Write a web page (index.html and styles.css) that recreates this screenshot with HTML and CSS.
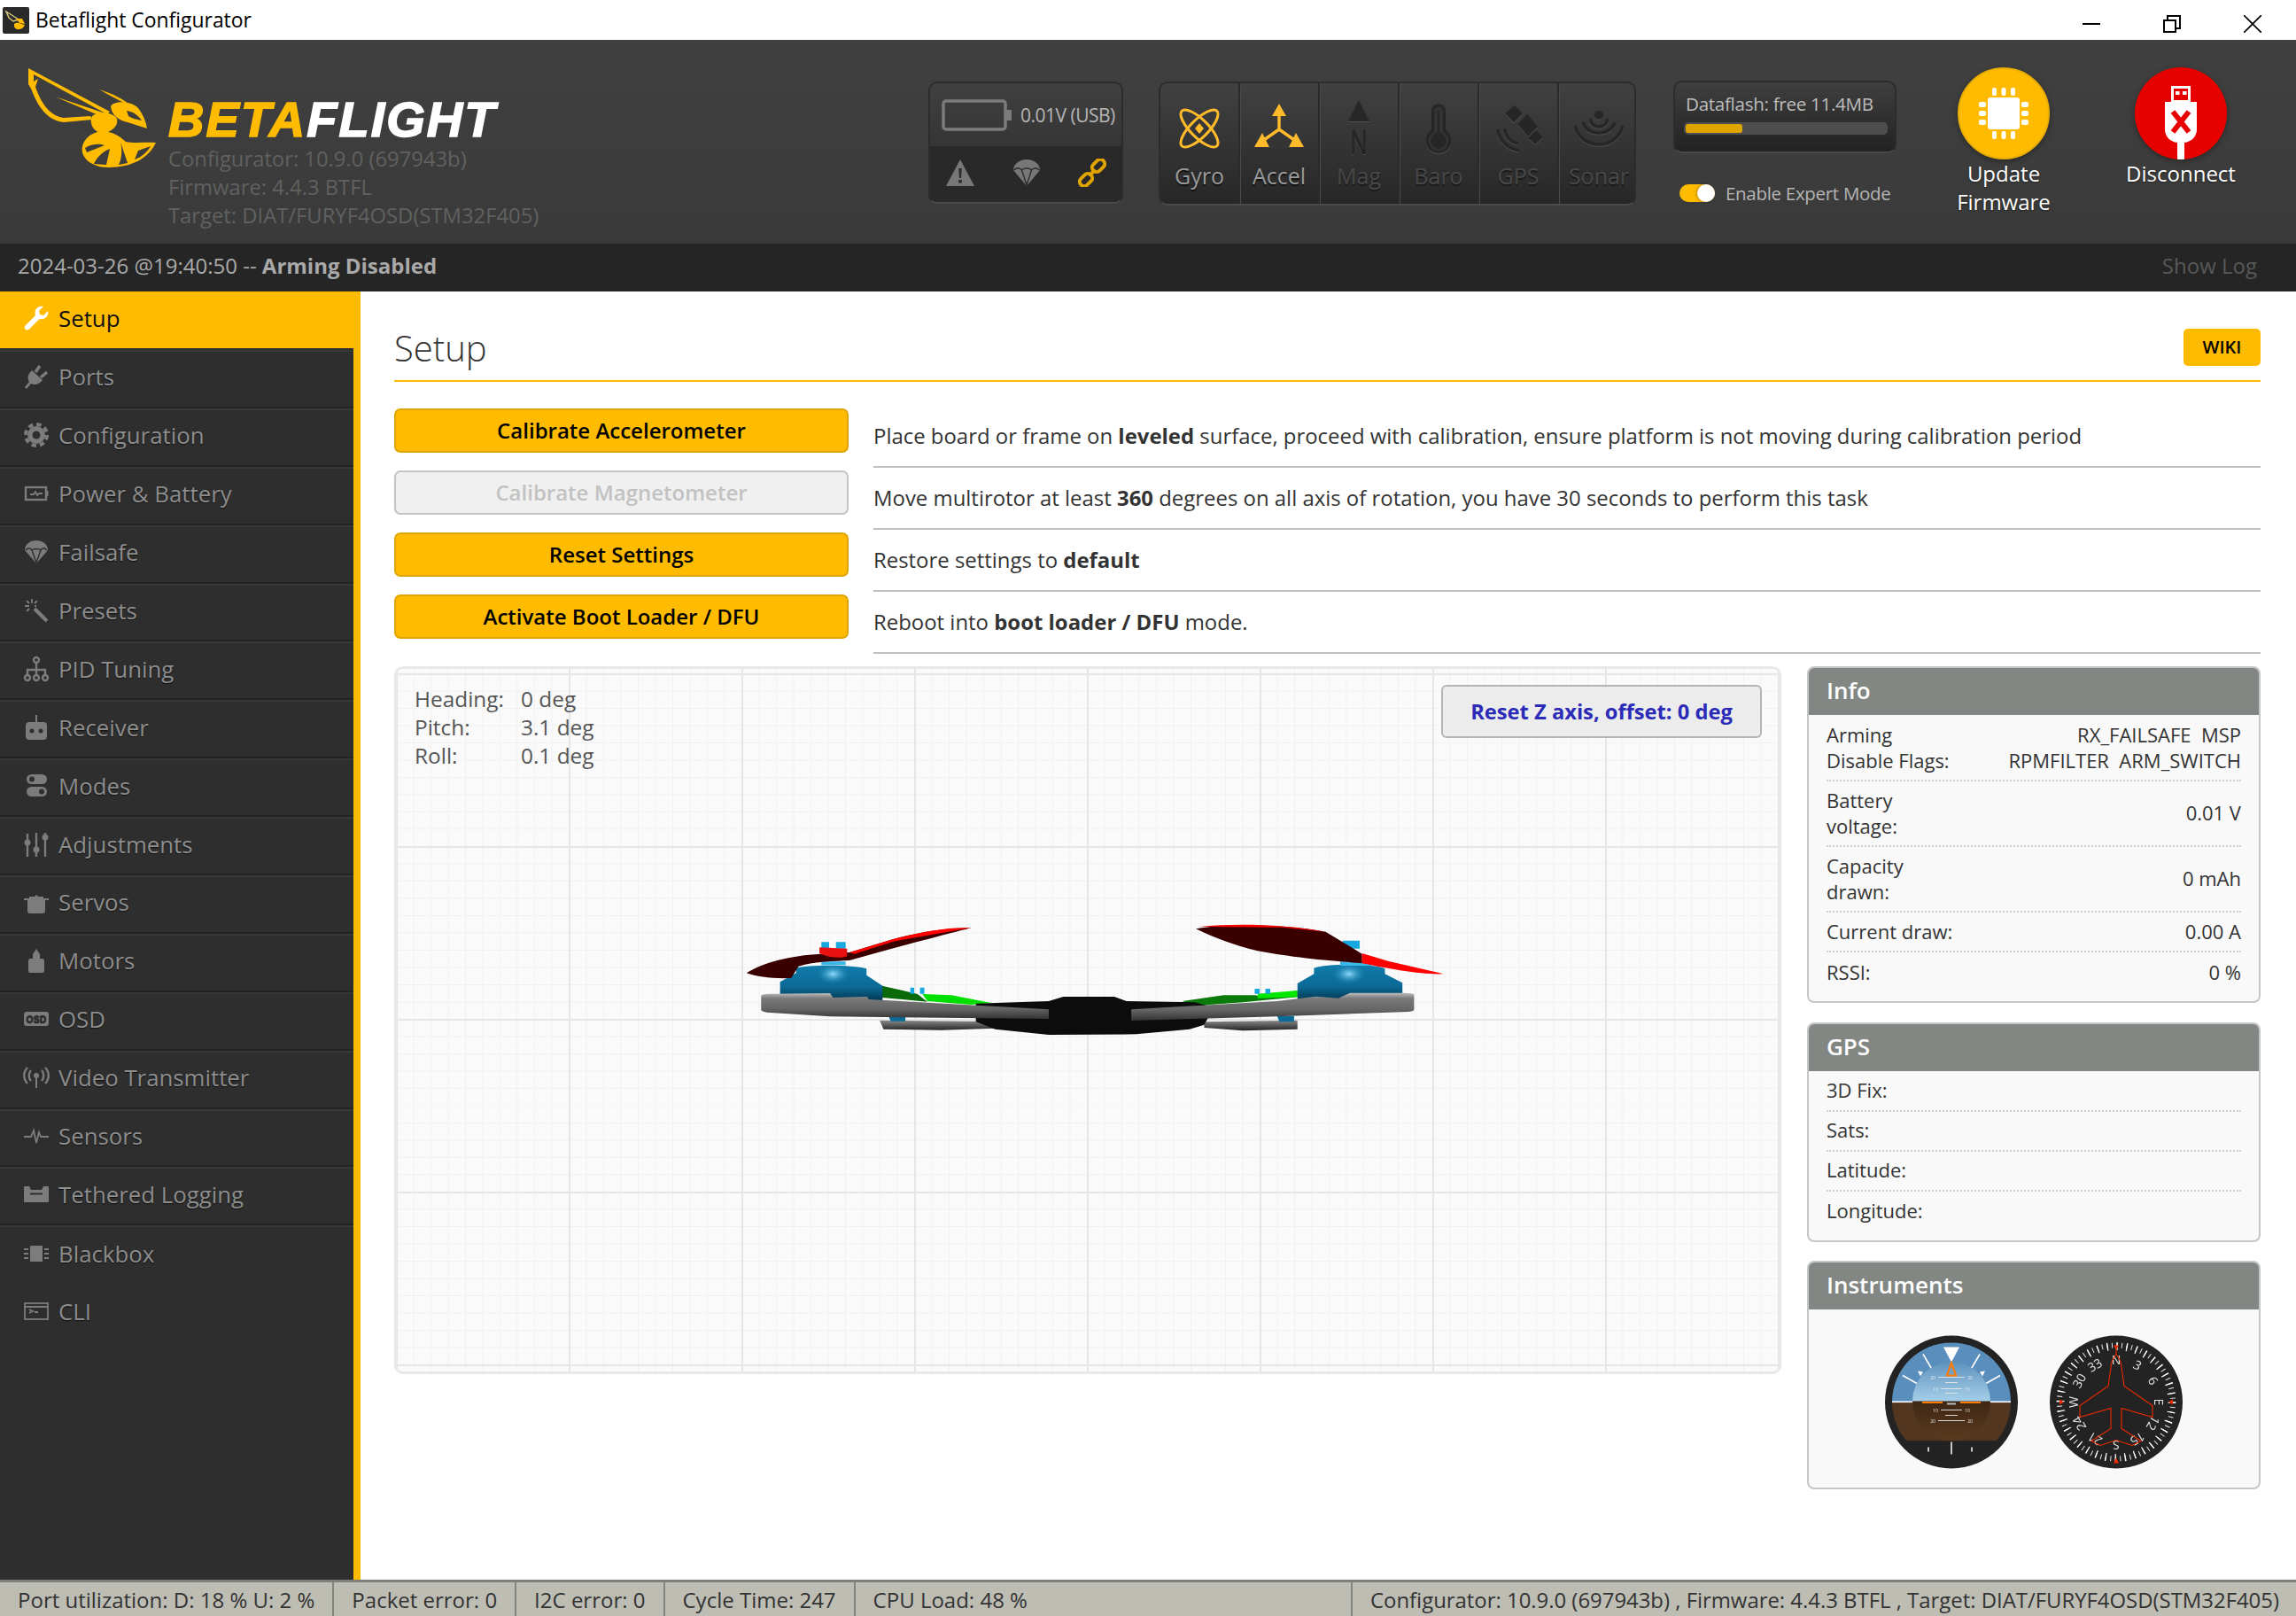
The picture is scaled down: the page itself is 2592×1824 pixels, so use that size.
FILE: index.html
```html
<!DOCTYPE html>
<html lang="en">
<head>
  <meta charset="UTF-8" />
  <title>Betaflight Configurator</title>
  <link rel="stylesheet" href="styles.css">
</head>
<body>

  <div class="titlebar">
    <svg class="app-icon" viewBox="0 0 30 30">
      <rect width="30" height="30" rx="2" fill="#2a2a2a"/>
      <path d="M4 5 L18 14 L12 16 L7 12Z" fill="none" stroke="#d9c97a" stroke-width="1.4"/>
      <path d="M15 13 L22 13 L25 19 L19 18Z" fill="#ffbb00"/>
      <path d="M13 19 C16 16 21 19 25 20 C23 26 15 27 13 22Z" fill="#ffbb00"/>
    </svg>
    <span class="app-name">Betaflight Configurator</span>
    <div class="window-buttons">
      <svg class="win-btn" viewBox="0 0 20 20"><path d="M0 10H20" stroke="#000" stroke-width="2"/></svg>
      <svg class="win-btn" viewBox="0 0 20 20"><path d="M1 6H14V19H1Z M5 6V1H19V15H14" fill="none" stroke="#000" stroke-width="2"/></svg>
      <svg class="win-btn" viewBox="0 0 20 20"><path d="M0 0L20 20M20 0L0 20" stroke="#000" stroke-width="1.6"/></svg>
    </div>
  </div>

  <header class="header">
    <div class="logo">
      <svg class="wasp" viewBox="32 77 144 112">
        <g fill="#ffbb00">
          <path d="M32 77 L124 126 L121 129 L38 84 L38 92 L43 89 L40 98 C47 118 57 131 72 133 L102 131 L104 135 L72 138 C52 136 42 118 35 100 L32 95Z"/>
          <path d="M62 109 L122 129 L118 133Z"/>
          <path d="M112 101 C128 106 140 112 148 120 C138 115 124 108 112 101Z"/>
          <path d="M125 120 C130 112 150 115 156 122 C162 130 165 138 166 145 L144 138 C134 136 126 130 125 120Z"/>
          <path d="M104 131 C110 125 128 126 132 134 C134 142 126 150 114 150 C106 149 100 139 104 131Z"/>
          <path d="M110 149 C122 146 134 152 142 160 C152 162 166 160 176 161 C168 178 150 189 122 189 C104 189 90 178 93 165 C95 157 102 151 110 149Z"/>
        </g>
        <path d="M143 125 C150 126 156 130 160 136 C154 135 148 133 145 131Z" fill="#3c3d3c"/>
        <path d="M96 167 C104 162 112 162 118 164 L98 172Z M106 185 C110 176 118 170 124 168 L120 186Z M134 186 C138 178 138 168 136 160 L144 184Z M152 180 L156 170 L170 165 C166 172 160 177 152 180Z" fill="#3c3d3c"/>
      </svg>
      <div class="logo-text">
        <div class="wordmark"><span class="word-beta">BETA</span>FLIGHT</div>
        <div class="version">Configurator: 10.9.0 (697943b)</div>
        <div class="version">Firmware: 4.4.3 BTFL</div>
        <div class="version">Target: DIAT/FURYF4OSD(STM32F405)</div>
      </div>
    </div>

    <div class="battery-panel">
      <div class="battery-top">
        <svg class="battery-icon" viewBox="0 0 80 36"><rect x="2" y="2" width="70" height="32" rx="3" fill="none" stroke="#7c7c7c" stroke-width="3.5"/><rect x="73" y="12" width="6" height="12" fill="#7c7c7c"/></svg>
        <span class="voltage">0.01V (USB)</span>
      </div>
      <div class="battery-bottom">
        <svg class="flag-icon" viewBox="0 0 34 32"><path d="M17 1 L33 31 H1Z" fill="#777"/><path d="M15.2 11 H18.8 L18 22 H16Z M15.2 24 H18.8 V27.5 H15.2Z" fill="#2c2c2c"/></svg>
        <svg class="flag-icon" viewBox="0 0 34 32"><path d="M17 1 C8 1 2 7 2 13 L17 31 L32 13 C32 7 26 1 17 1Z" fill="#777"/><path d="M2.5 13 C6 10 9 10 11.5 13 L17 30 L22.5 13 C25 10 28 10 31.5 13 M11.5 13 C14 10 20 10 22.5 13" fill="none" stroke="#2c2c2c" stroke-width="1.4"/></svg>
        <svg class="flag-icon" viewBox="0 0 34 32"><g fill="none" stroke="#e0a400" stroke-width="4"><rect x="16" y="3" width="16" height="10" rx="5" transform="rotate(-45 24 8)"/><rect x="2" y="19" width="16" height="10" rx="5" transform="rotate(-45 10 24)"/><path d="M13 19 L21 13"/></g></svg>
      </div>
    </div>

    <div class="sensors">
      <div class="sensor on">
        <svg class="sensor-icon" viewBox="0 0 60 54">
          <g fill="none" stroke="#ffbb2a" stroke-width="3"><ellipse cx="30" cy="29" rx="10" ry="28" transform="rotate(-45 30 29)"/><ellipse cx="30" cy="29" rx="10" ry="28" transform="rotate(45 30 29)"/></g>
          <path d="M30 23 L35 29 L30 35 L25 29Z" fill="#ffbb2a"/>
        </svg>
        <span>Gyro</span>
      </div>
      <div class="sensor on">
        <svg class="sensor-icon" viewBox="0 0 60 54">
          <path d="M30 8 L30 30 L10 44 M30 30 L50 44" fill="none" stroke="#ffbb2a" stroke-width="3.4"/>
          <path d="M30 1 L38 15 H22Z M2 50 L11 34 L19 50Z M58 50 L49 34 L41 50Z" fill="#ffbb2a"/>
        </svg>
        <span>Accel</span>
      </div>
      <div class="sensor">
        <svg class="sensor-icon" viewBox="0 0 60 54">
          <path d="M30 -3 L42 21 H18Z" fill="#272727"/>
          <text class="mag-n" x="30" y="56" text-anchor="middle" textLength="20" lengthAdjust="spacingAndGlyphs">N</text>
        </svg>
        <span>Mag</span>
      </div>
      <div class="sensor">
        <svg class="sensor-icon" viewBox="0 0 60 54">
          <path d="M22 9 C22 -1 38 -1 38 9 V31 C50 39 44 57 30 57 C16 57 10 39 22 31Z" fill="#262626"/>
          <path d="M25 9 C25 3 35 3 35 9 V33 C46 40 41 54 30 54 C19 54 14 40 25 33Z" fill="#333"/>
          <path d="M29 9 H31 V34 H29Z" fill="#262626"/><circle cx="30" cy="43" r="9" fill="#262626"/>
        </svg>
        <span>Baro</span>
      </div>
      <div class="sensor">
        <svg class="sensor-icon" viewBox="0 0 60 54">
          <path d="M26 3 L15 12 L25 22 L35 12Z M40 13 L52 27 L41 38 L29 24Z M50 31 L58 39 L49 47 L41 40Z" fill="#262626"/>
          <path d="M7 30 C8 42 18 52 31 54 M15 29 C15 38 22 45 30 46" fill="none" stroke="#262626" stroke-width="3.400"/>
        </svg>
        <span>GPS</span>
      </div>
      <div class="sensor">
        <svg class="sensor-icon" viewBox="0 0 60 54">
          <circle cx="30" cy="14" r="5" fill="#262626"/>
          <g fill="none" stroke="#262626" stroke-width="3.600"><path d="M20 18 C22 30 38 30 40 18"/><path d="M12 22 C16 38 44 38 48 22"/><path d="M3 26 C10 54 50 54 57 26"/></g>
        </svg>
        <span>Sonar</span>
      </div>
    </div>

    <div class="flash-col">
      <div class="flash">
        <div class="flash-label">Dataflash: free 11.4MB</div>
        <div class="flash-track"><div class="flash-fill"></div></div>
      </div>
      <div class="expert">
        <span class="toggle"><span class="knob"></span></span>
        <span>Enable Expert Mode</span>
      </div>
    </div>

    <div class="round-action">
      <span class="circle yellow">
        <svg class="chip" viewBox="0 0 56 58">
          <rect x="10" y="11" width="36" height="36" rx="3" fill="#fff"/>
          <g fill="#fff">
            <rect x="15" y="0" width="5" height="9" rx="2"/><rect x="25.500" y="0" width="5" height="9" rx="2"/><rect x="36" y="0" width="5" height="9" rx="2"/>
            <rect x="15" y="49" width="5" height="9" rx="2"/><rect x="25.500" y="49" width="5" height="9" rx="2"/><rect x="36" y="49" width="5" height="9" rx="2"/>
            <rect x="0" y="16" width="8" height="6" rx="2"/><rect x="0" y="26" width="8" height="6" rx="2"/><rect x="0" y="36" width="8" height="6" rx="2"/>
            <rect x="48" y="16" width="8" height="6" rx="2"/><rect x="48" y="26" width="8" height="6" rx="2"/><rect x="48" y="36" width="8" height="6" rx="2"/>
          </g>
        </svg>
      </span>
      <span class="round-label">Update<br>Firmware</span>
    </div>
    <div class="round-action">
      <span class="circle red">
        <svg class="usb" viewBox="0 0 104 104">
          <path d="M41 21 H63 V39 H70 V70 C70 78 64 84 56 85 V104 H48 V85 C40 84 34 78 34 70 V39 H41Z" fill="#fff"/>
          <path d="M44 24 H60 V37 H44Z" fill="#e60000"/>
          <path d="M46 27 H50.500 V31 H46Z M54 27 H58.500 V31 H54Z" fill="#fff"/>
          <path d="M43 50 L61 73 M61 50 L43 73" stroke="#e60000" stroke-width="6"/>
        </svg>
      </span>
      <span class="round-label">Disconnect</span>
    </div>
  </header>

  <div class="logbar">
    <div>2024-03-26 @19:40:50 -- <strong>Arming Disabled</strong></div>
    <div class="show-log">Show Log</div>
  </div>

  <div class="main">
    <nav class="sidebar">
      <a class="nav-item active">
        <svg class="nav-icon" viewBox="0 0 28 28"><path fill="#fff" d="M27 6 L22 11 L18 10 L17 6 L22 1 C17 0 12.500 3 12.500 8 C12.500 9 12.700 10 13 11 L1.500 22.500 C0 24 .5 26 2 27 C3.500 28 5 27.500 6 26.500 L17.500 15 C23 16.500 28.500 12 27 6Z"/></svg>
        <span>Setup</span>
      </a>
      <a class="nav-item">
        <svg class="nav-icon" viewBox="0 0 28 28"><path d="M1 26 L6 20 C3 15 5 11 9 7 L21 18 C17 23 12 24 8 22 L3 28Z"/><path class="nav-stroke" d="M13 9 L18 2 M19 15 L26 9"/></svg>
        <span>Ports</span>
      </a>
      <a class="nav-item">
        <svg class="nav-icon" viewBox="0 0 28 28"><circle class="gear-teeth" cx="14" cy="14" r="12"/><circle cx="14" cy="14" r="10"/><circle class="nav-hole" cx="14" cy="14" r="4.500"/></svg>
        <span>Configuration</span>
      </a>
      <a class="nav-item">
        <svg class="nav-icon" viewBox="0 0 28 28"><rect class="nav-line" x="2" y="7" width="23" height="14"/><rect x="25" y="11" width="2.500" height="6"/><path class="nav-thin" d="M7 15 H11 L13 12 L15 16 L17 14 H21"/></svg>
        <span>Power &amp; Battery</span>
      </a>
      <a class="nav-item">
        <svg class="nav-icon" viewBox="0 0 28 28"><path d="M14 1 C7 1 1 5 1 12 L14 27 L27 12 C27 5 21 1 14 1Z"/><path class="nav-cut" d="M2 12 C5 9 7 9 9 12 L14 26 L19 12 C21 9 23 9 26 12 M9 12 C11 10 17 10 19 12"/></svg>
        <span>Failsafe</span>
      </a>
      <a class="nav-item">
        <svg class="nav-icon" viewBox="0 0 28 28"><path class="nav-wide" d="M12 12 L26 26"/><path class="nav-thin" d="M1 9 H6 M9 1 V6 M3 3 L6 6 M15 3 L12 6 M3 15 L6 12 M14 9 H12"/></svg>
        <span>Presets</span>
      </a>
      <a class="nav-item">
        <svg class="nav-icon" viewBox="0 0 28 28"><g class="nav-line"><circle cx="14" cy="4" r="3"/><circle cx="4" cy="24" r="3"/><circle cx="14" cy="24" r="3"/><circle cx="24" cy="24" r="3"/><path d="M14 7 V21 M4 21 V15 H24 V21"/></g></svg>
        <span>PID Tuning</span>
      </a>
      <a class="nav-item">
        <svg class="nav-icon" viewBox="0 0 28 28"><rect x="13" y="0" width="2" height="10"/><rect x="2" y="8" width="24" height="20" rx="4"/><circle class="nav-hole" cx="9" cy="18" r="2.500"/><circle class="nav-hole" cx="19" cy="18" r="2.500"/></svg>
        <span>Receiver</span>
      </a>
      <a class="nav-item">
        <svg class="nav-icon" viewBox="0 0 28 28"><rect x="3" y="1" width="23" height="11" rx="5.500"/><rect x="3" y="15" width="23" height="11" rx="5.500"/><circle class="nav-hole" cx="9" cy="6.500" r="3"/><circle class="nav-hole" cx="20" cy="20.500" r="3"/></svg>
        <span>Modes</span>
      </a>
      <a class="nav-item">
        <svg class="nav-icon" viewBox="0 0 28 28"><path class="nav-line" d="M4 2 V28 M14 1 V28 M24 1 V28"/><circle cx="4" cy="12" r="3.500"/><circle cx="14" cy="20" r="3.500"/><circle cx="24" cy="6" r="3.500"/></svg>
        <span>Adjustments</span>
      </a>
      <a class="nav-item">
        <svg class="nav-icon" viewBox="0 0 28 28"><path d="M0 10 H6 V8 H12 L14 6 L16 8 H22 V10 H28 V12 H24 V24 C24 26 23 27 21 27 H7 C5 27 4 26 4 24 V12 H0Z"/></svg>
        <span>Servos</span>
      </a>
      <a class="nav-item">
        <svg class="nav-icon" viewBox="0 0 28 28"><path d="M14 1 L18 7 V12 H21 C22 12 23 13 23 15 V26 C23 27 22 28 21 28 H7 C6 28 5 27 5 26 V15 C5 13 6 12 7 12 H10 V7Z"/></svg>
        <span>Motors</span>
      </a>
      <a class="nav-item">
        <svg class="nav-icon" viewBox="0 0 28 28"><rect x="0" y="6" width="28" height="16" rx="3"/><text class="osd-text" x="14" y="18" text-anchor="middle">OSD</text></svg>
        <span>OSD</span>
      </a>
      <a class="nav-item">
        <svg class="nav-icon" viewBox="0 0 28 28"><circle cx="14" cy="12" r="3"/><rect x="13" y="13" width="2" height="13"/><path class="nav-line" d="M8 6 C5 9 5 15 8 18 M20 6 C23 9 23 15 20 18 M4 3 C-1 8 -1 16 4 21 M24 3 C29 8 29 16 24 21"/></svg>
        <span>Video Transmitter</span>
      </a>
      <a class="nav-item">
        <svg class="nav-icon" viewBox="0 0 28 28"><path class="nav-thin" d="M0 15 H8 L11 8 L14 22 L17 10 L19 15 H28"/></svg>
        <span>Sensors</span>
      </a>
      <a class="nav-item">
        <svg class="nav-icon" viewBox="0 0 28 28"><path d="M0 6 C0 5 1 5 2 5 H6 L8 9 H20 L22 5 H26 C27 5 28 5 28 6 V22 C28 23 27 23 26 23 H2 C1 23 0 23 0 22Z"/><rect class="nav-hole" x="7" y="12.500" width="14" height="2"/></svg>
        <span>Tethered Logging</span>
      </a>
      <a class="nav-item">
        <svg class="nav-icon" viewBox="0 0 28 28"><rect x="7" y="5" width="14" height="18" rx="1"/><path class="nav-thin" d="M0 9 H5 M0 14 H5 M0 19 H5 M23 9 H28 M23 14 H28 M23 19 H28"/></svg>
        <span>Blackbox</span>
      </a>
      <a class="nav-item">
        <svg class="nav-icon" viewBox="0 0 28 28"><rect class="nav-thin" x="1" y="5" width="26" height="18"/><path class="nav-thin" d="M1 9 H27 M6 12 L10 14 L6 16 M12 15 H16"/></svg>
        <span>CLI</span>
      </a>
    </nav>

    <section class="content">
      <div class="page-head">
        <h1>Setup</h1>
        <a class="wiki">WIKI</a>
      </div>

      <div class="actions">
        <div class="action">
          <button class="btn">Calibrate Accelerometer</button>
          <p class="note">Place board or frame on <b>leveled</b> surface, proceed with calibration, ensure platform is not moving during calibration period</p>
        </div>
        <div class="action">
          <button class="btn disabled">Calibrate Magnetometer</button>
          <p class="note">Move multirotor at least <b>360</b> degrees on all axis of rotation, you have 30 seconds to perform this task</p>
        </div>
        <div class="action">
          <button class="btn">Reset Settings</button>
          <p class="note">Restore settings to <b>default</b></p>
        </div>
        <div class="action">
          <button class="btn">Activate Boot Loader / DFU</button>
          <p class="note">Reboot into <b>boot loader / DFU</b> mode.</p>
        </div>
      </div>

      <div class="lower">
        <div class="model">
          <div class="attitude">
            <div>Heading:</div><div>0 deg</div>
            <div>Pitch:</div><div>3.1 deg</div>
            <div>Roll:</div><div>0.1 deg</div>
          </div>
          <button class="reset-z">Reset Z axis, offset: 0 deg</button>

          <svg class="drone" viewBox="0 0 1568 600" preserveAspectRatio="none">
            <defs>
              <linearGradient id="armGrad" x1="0" y1="0" x2="0" y2="1"><stop offset="0" stop-color="#bdbdbd"/><stop offset=".2" stop-color="#7a7a7a"/><stop offset=".6" stop-color="#666"/><stop offset="1" stop-color="#333"/></linearGradient>
              <linearGradient id="lowGrad" x1="0" y1="0" x2="0" y2="1"><stop offset="0" stop-color="#8a8a8a"/><stop offset="1" stop-color="#222"/></linearGradient>
              <linearGradient id="motorGrad" x1="0" y1="0" x2="0" y2="1"><stop offset="0" stop-color="#0f7cab"/><stop offset=".55" stop-color="#0b6a96"/><stop offset="1" stop-color="#012c42"/></linearGradient>
              <radialGradient id="shine" cx=".5" cy=".5" r=".5"><stop offset="0" stop-color="#8fdcff"/><stop offset="1" stop-color="#0f7cab" stop-opacity="0"/></radialGradient>
            </defs>
            <path d="M352 425 L550 428 L590 452 L480 458 L360 455Z M1020 430 L1212 425 V455 L1100 460 L1020 450Z" fill="url(#lowGrad)"/>
            <path d="M370 410 H405 V428 H375Z M1170 410 H1205 V430 H1175Z" fill="#0b6a96"/>
            <path d="M357 308 L430 336 L450 362 L357 348Z" fill="#0a6a0a"/>
            <path d="M440 336 L500 340 L582 366 L540 372 L450 360Z" fill="#00e000"/>
            <path d="M975 360 L1060 340 L1125 340 L1150 348 L1212 324 V346 L1100 364 L1000 376Z" fill="#0a7a0a"/>
            <path d="M1130 335 L1212 324 V346 L1130 350Z" fill="#00e800"/>
            <path d="M415 314 H423 V335 H415Z M435 314 H444 V335 H435Z M1124 318 H1134 V335 H1124Z M1146 318 H1156 V335 H1146Z" fill="#18a8e0"/>
            <path d="M550 368 L700 360 L730 345 L835 345 L860 360 L1000 364 L1040 380 L1020 440 L990 455 L880 472 L700 474 L590 455 L550 430Z" fill="#0c0c0c"/>
            <path d="M147 295 L180 265 V248 C200 236 300 236 325 250 V272 L358 308 V370 L147 360Z" fill="url(#motorGrad)"/>
            <ellipse cx="256" cy="268" rx="36" ry="36" fill="url(#shine)"/>
            <path d="M1212 300 L1246 268 V248 C1270 232 1370 232 1392 250 V268 L1428 298 V360 L1212 370Z" fill="url(#motorGrad)"/>
            <ellipse cx="1318" cy="268" rx="36" ry="36" fill="url(#shine)"/>
            <path d="M108 342 C108 336 120 335 130 335 L250 333 L256 348 L326 345 L330 354 L700 388 V420 L250 412 L120 398 C110 396 108 392 108 388Z" fill="url(#armGrad)"/>
            <path d="M1452 338 C1452 334 1440 332 1430 332 L1320 332 L1296 350 L1250 344 L1170 360 L870 388 V426 L1170 412 L1300 404 L1440 396 C1450 394 1452 392 1452 388Z" fill="url(#armGrad)"/>
            <path d="M232 226 H282 V238 H232Z M1300 226 H1365 V240 H1300Z" fill="#3cb8e8"/>
            <path d="M232 160 H248 V182 H232Z M262 160 H282 V182 H262Z M1305 155 H1340 V182 H1305Z" fill="#18a8e0"/>
            <path d="M78 265 C110 230 170 205 230 200 L290 195 L380 150 C430 128 490 112 540 112 C500 130 400 170 290 222 C260 225 220 225 185 242 L170 282 C130 284 100 278 78 265Z" fill="#3a0000"/>
            <path d="M290 195 L380 150 C430 128 490 108 540 112 L380 158 L300 200Z" fill="#ff0000"/>
            <path d="M228 178 L285 182 V208 C270 216 250 214 228 198Z" fill="#e81010"/>
            <path d="M1003 115 C1050 98 1180 96 1270 125 L1345 200 V232 C1300 225 1230 220 1130 190 C1080 170 1040 145 1003 115Z" fill="#3a0000"/>
            <path d="M1010 108 C1080 96 1180 98 1270 125 L1180 110Z" fill="#ff0000"/>
            <path d="M1345 198 L1400 225 L1513 268 C1470 272 1400 250 1345 232Z" fill="#ff0000"/>
          </svg>
        </div>

        <aside class="side">
          <div class="panel">
            <div class="panel-head">Info</div>
            <div class="panel-body">
              <div class="row two-line">
                <span>Arming<br>Disable Flags:</span>
                <span class="row-value">RX_FAILSAFE&nbsp; MSP<br>RPMFILTER&nbsp; ARM_SWITCH</span>
              </div>
              <div class="row two-line"><span>Battery<br>voltage:</span><span class="row-value">0.01 V</span></div>
              <div class="row two-line"><span>Capacity<br>drawn:</span><span class="row-value">0 mAh</span></div>
              <div class="row"><span>Current draw:</span><span class="row-value">0.00 A</span></div>
              <div class="row"><span>RSSI:</span><span class="row-value">0 %</span></div>
            </div>
          </div>

          <div class="panel">
            <div class="panel-head">GPS</div>
            <div class="panel-body">
              <div class="row"><span>3D Fix:</span></div>
              <div class="row"><span>Sats:</span></div>
              <div class="row"><span>Latitude:</span></div>
              <div class="row"><span>Longitude:</span></div>
            </div>
          </div>

          <div class="panel">
            <div class="panel-head">Instruments</div>
            <div class="gauges">
              <svg class="gauge" viewBox="0 0 150 150">
                <defs>
                  <clipPath id="faceClip"><circle cx="75" cy="75" r="67"/></clipPath>
                  <linearGradient id="ballSky" x1="0" y1="0" x2="0" y2="1"><stop offset="0" stop-color="#5f93bf"/><stop offset="1" stop-color="#a5cfe8"/></linearGradient>
                  <linearGradient id="ballGround" x1="0" y1="0" x2="0" y2="1"><stop offset="0" stop-color="#3e2714"/><stop offset="1" stop-color="#5a3a20"/></linearGradient>
                </defs>
                <circle cx="75" cy="75" r="75" fill="#232323"/>
                <g clip-path="url(#faceClip)">
                  <rect x="0" y="0" width="150" height="75" fill="#5a8fbd"/>
                  <rect x="0" y="75" width="150" height="44" fill="#523620"/>
                  <rect x="0" y="119" width="150" height="31" fill="#222"/>
                  <rect x="0" y="74" width="150" height="1.600" fill="#fff"/>
                </g>
                <path d="M66 13 H84 L75 30Z" fill="#fff"/>
                <path d="M43 21 L53 38 M107 21 L97 38 M20 45 L36 54 M130 45 L114 54" stroke="#fff" stroke-width="1.600"/>
                <path d="M37 40 L43 41 L40 46Z M113 40 L107 41 L110 46Z" fill="#fff"/>
                <path d="M49 126 V131 M98 126 V131" stroke="#fff" stroke-width="1.500"/><path d="M75 120 V134" stroke="#fff" stroke-width="1.500"/>
                <path d="M31 74 A44 44 0 0 1 119 74Z" fill="url(#ballSky)"/>
                <path d="M31 74 A44 44 0 0 0 119 74Z" fill="url(#ballGround)"/>
                <path d="M60 47 H90 M68 53 H82 M63 60 H87 M68 65 H82 M63 84 H87 M68 90 H82 M60 96 H90" stroke="#e8e8e8" stroke-width=".9"/>
                <path d="M75 31 L70 45 H80Z" fill="none" stroke="#ff7a00" stroke-width="2.200"/>
                <path d="M42 75.500 H65 M85 75.500 H108" stroke="#ff7a00" stroke-width="2.200"/>
                <path d="M70 77 H80" stroke="#bbb" stroke-width="2"/>
                <text class="gauge-tiny" x="54" y="49" text-anchor="middle">20</text><text class="gauge-tiny" x="96" y="49" text-anchor="middle">20</text>
                <text class="gauge-tiny" x="57" y="62" text-anchor="middle">10</text><text class="gauge-tiny" x="93" y="62" text-anchor="middle">10</text>
                <text class="gauge-tiny" x="57" y="86" text-anchor="middle">10</text><text class="gauge-tiny" x="93" y="86" text-anchor="middle">10</text>
                <text class="gauge-tiny" x="54" y="98" text-anchor="middle">20</text><text class="gauge-tiny" x="96" y="98" text-anchor="middle">20</text>
              </svg>

              <svg class="gauge" viewBox="0 0 150 150">
                <circle cx="75" cy="75" r="75" fill="#232323"/>
                <circle class="ticks-fine" cx="75" cy="75" r="64"/>
                <circle class="ticks-major" cx="75" cy="75" r="63"/>
                <g class="compass-text" text-anchor="middle">
                  <text x="75" y="32">N</text>
                  <text x="75" y="32" transform="rotate(30 75 75)">3</text>
                  <text x="75" y="32" transform="rotate(60 75 75)">6</text>
                  <text x="75" y="32" transform="rotate(90 75 75)">E</text>
                  <text x="75" y="32" transform="rotate(120 75 75)">12</text>
                  <text x="75" y="32" transform="rotate(150 75 75)">15</text>
                  <text x="75" y="32" transform="rotate(180 75 75)">S</text>
                  <text x="75" y="32" transform="rotate(210 75 75)">21</text>
                  <text x="75" y="32" transform="rotate(240 75 75)">24</text>
                  <text x="75" y="32" transform="rotate(270 75 75)">W</text>
                  <text x="75" y="32" transform="rotate(300 75 75)">30</text>
                  <text x="75" y="32" transform="rotate(330 75 75)">33</text>
                </g>
                <path d="M75 11 V21 C79 26 81 31 81 36 L84 57 L116 79 V92 L81 82 L81 105 L103 119 L93 124 L75 118 L57 124 L47 119 L69 105 L69 82 L34 92 V79 L66 57 L69 36 C69 31 71 26 75 21" fill="none" stroke="#f02a00" stroke-width="1.100"/>
                <path d="M72 11 H78 L75 16Z M72 144 L75 138 L78 144Z M11 72 V78 L16 75Z M139 72 V78 L134 75Z" fill="#f02a00"/>
              </svg>
            </div>
          </div>
        </aside>
      </div>
    </section>
  </div>

  <footer class="status">
    <div class="stat">Port utilization: D: 18 % U: 2 %</div>
    <div class="stat">Packet error: 0</div>
    <div class="stat">I2C error: 0</div>
    <div class="stat">Cycle Time: 247</div>
    <div class="stat cpu-stat">CPU Load: 48 %</div>
    <div class="stat version-stat">Configurator: 10.9.0 (697943b) , Firmware: 4.4.3 BTFL , Target: DIAT/FURYF4OSD(STM32F405)</div>
  </footer>

</body>
</html>
```

FILE: styles.css
```css
* { box-sizing: border-box; }
html, body { margin: 0; height: 1824px; overflow: hidden; }
body { background: #fff; font-family: "Open Sans", Arial, sans-serif; color: #333; }

/* window chrome */
.titlebar { height: 45px; display: flex; align-items: center; padding-left: 3px; background: #fff; }
.app-icon { width: 30px; height: 30px; }
.app-name { margin-left: 7px; font-family: "Open Sans", sans-serif; font-size: 22.900px; color: #000; }
.window-buttons { margin-left: auto; display: flex; gap: 71px; padding-right: 39px; margin-top: 8px; }
.win-btn { width: 20px; height: 20px; }

/* header */
.header { height: 230px; display: flex; align-items: flex-start; background: linear-gradient(#3f403f, #393a39); }
.logo { width: 1048px; display: flex; padding: 32px 0 0 32px; }
.wasp { width: 144px; height: 112px; }
.logo-text { margin: 30px 0 0 14px; }
.wordmark { height: 56px; line-height: 56px; font-family: "Liberation Sans", Arial, sans-serif; font-weight: 700; font-style: italic; font-size: 56px; letter-spacing: 2px; color: #fff; -webkit-text-stroke: 1.600px currentColor; white-space: nowrap; }
.word-beta { color: #ffbb00; }
.version { font-size: 23.800px; line-height: 32px; color: #606160; white-space: nowrap; }

.battery-panel { width: 220px; height: 138px; margin-top: 47px; border-radius: 10px; overflow: hidden; border: 2px solid #2c2c2c; border-bottom-color: #4a4a4a; background: #292929; }
.battery-top { height: 71px; display: flex; align-items: center; padding-left: 13px; gap: 9px; background: linear-gradient(#404040, #353535); }
.battery-icon { width: 80px; height: 36px; flex: none; }
.voltage { font-size: 21px; color: #b6b6b6; white-space: nowrap; letter-spacing: -.5px; }
.battery-bottom { height: 65px; display: flex; align-items: center; gap: 40.500px; padding: 0 0 6px 17px; }
.flag-icon { width: 34px; height: 32px; }

.sensors { width: 539px; height: 140px; margin: 47px 0 0 40px; display: flex; border: 2px solid #2c2c2c; border-bottom-color: #4a4a4a; border-radius: 10px; overflow: hidden; background: linear-gradient(#414141, #272727); }
.sensor { width: 90px; flex: none; border-right: 2px solid #2a2a2a; box-shadow: inset 1px 0 0 #4a4a4a; display: flex; flex-direction: column; align-items: center; padding-top: 22px; font-size: 25px; color: #484848; text-shadow: 0 2px 0 #1a1a1a; }
.sensor:first-child { box-shadow: none; }
.sensor:last-child { border-right: 0; }
.sensor.on { color: #9a9a9a; text-shadow: 0 2px 0 #111; }
.sensor-icon { width: 60px; height: 54px; flex: none; overflow: visible; filter: drop-shadow(0 1px 0 #505050); }
.sensor.on .sensor-icon { filter: none; }
.sensor span { margin-top: 11px; line-height: 34px; }
.mag-n { font-family: "Open Sans", sans-serif; font-size: 37px; fill: #272727; }

.flash-col { width: 252px; margin: 46px 0 0 42px; }
.flash { height: 82px; padding: 11px 12px 0; border: 2px solid #2c2c2c; border-bottom-color: #4a4a4a; border-radius: 10px; background: linear-gradient(#3f3f3f, #222); }
.flash-label { font-size: 20.600px; line-height: 26px; color: #bdbdbd; letter-spacing: -.3px; white-space: nowrap; }
.flash-track { height: 14px; margin: 8px 0 0 -2px; border-radius: 5px; background: #4e4e4e; padding: 2px; width: 230px; }
.flash-fill { width: 64px; height: 10px; border-radius: 3px; background: #e0a400; }
.expert { display: flex; align-items: center; gap: 12px; margin: 31px 0 0 7px; font-size: 20.500px; color: #b5b5b5; white-space: nowrap; letter-spacing: -.3px; }
.toggle { width: 40px; height: 20px; flex: none; border-radius: 10px; background: #ffbb00; position: relative; }
.knob { position: absolute; right: 0; top: 0; width: 20px; height: 20px; border-radius: 50%; background: #fff; box-shadow: -1px 0 3px rgba(0,0,0,.3); }

.round-action { width: 200px; margin: 31px 0 0 0; display: flex; flex-direction: column; align-items: center; }
.flash-col + .round-action { margin-left: 21px; }
.circle { width: 104px; height: 104px; border-radius: 50%; display: flex; align-items: center; justify-content: center; box-shadow: 0 2px 6px rgba(0,0,0,.35); overflow: hidden; }
.circle.yellow { background: #ffbb00; border: 2px solid #e8ac05; }
.circle.red { background: #e60000; }
.chip { width: 56px; height: 58px; }
.usb { width: 104px; height: 104px; }
.round-label { font-size: 24px; line-height: 32px; text-align: center; color: #fff; text-shadow: 0 1px 2px #222; }

/* log strip */
.logbar { height: 54px; display: flex; justify-content: space-between; align-items: center; padding: 0 44px 5px 20px; background: #252525; color: #a9a9a9; font-size: 24px; }
.show-log { color: #585858; }

/* main */
.main { height: 1454px; display: flex; }
.sidebar { width: 407px; flex: none; background: #2e2e2e; border-right: 8px solid #ffbb00; }
.nav-item { height: 65.900px; display: flex; align-items: center; gap: 11px; padding: 0 0 3px 27px; border-bottom: 2px solid #232323; box-shadow: inset 0 2px 0 #383838; font-size: 25.800px; color: #8d8d8d; text-shadow: 0 1px 1px #111; }
.nav-item:last-child { border-bottom: 0; box-shadow: none; height: 64px; }
.nav-item:nth-last-child(2) { border-bottom: 0; }
.nav-item.active { background: #ffbb00; color: #111; text-shadow: none; margin-right: -8px; border-bottom: 0; box-shadow: none; height: 64px; margin-bottom: 2px; padding-bottom: 5px; }
.nav-icon { width: 28px; height: 28px; flex: none; fill: #7c7c7c; overflow: visible; }
.nav-line, .nav-line * { fill: none; stroke: #7c7c7c; stroke-width: 2.400; }
.nav-thin { fill: none; stroke: #7c7c7c; stroke-width: 1.800; }
.nav-wide { fill: none; stroke: #7c7c7c; stroke-width: 4; }
.nav-stroke { fill: none; stroke: #7c7c7c; stroke-width: 3.600; }
.nav-cut { fill: none; stroke: #2e2e2e; stroke-width: 1.400; }
.nav-hole { fill: #2e2e2e; }
.gear-teeth { fill: none; stroke: #7c7c7c; stroke-width: 4; stroke-dasharray: 5.400 4; }
.osd-text { font-family: "Liberation Sans", sans-serif; font-weight: 700; font-size: 10.500px; fill: #2e2e2e; }

.content { flex: 1; min-width: 0; padding: 0 40px 0 38px; }
.page-head { height: 102px; display: flex; justify-content: space-between; align-items: flex-start; border-bottom: 2px solid #ffbb00; }
.page-head h1 { margin: 39px 0 0; font-size: 40px; line-height: 50px; font-weight: 300; color: #333; }
.wiki { margin-top: 42px; width: 87px; height: 42px; line-height: 42px; text-align: center; border-radius: 5px; background: #ffbb00; color: #000; font-size: 20px; font-weight: 600; }

.actions { margin-top: 27px; }
.action { height: 70px; display: flex; }
.btn { width: 513px; height: 50px; flex: none; margin-top: 3px; border: 2px solid #e0a400; border-radius: 7px; background: #ffbb00; color: #000; font-family: inherit; font-size: 24px; font-weight: 600; padding: 0 0 1px; }
.btn.disabled { background: #f0f0f0; border-color: #c4c4c4; color: #c2c2c2; }
.note { flex: 1; margin: 0 0 0 28px; line-height: 68px; border-bottom: 2px solid #bfbfbf; font-size: 23.930px; color: #333; white-space: nowrap; }
.note b { font-weight: 700; }

.lower { margin-top: 14px; display: flex; gap: 29px; align-items: flex-start; }
.model { width: 1566px; height: 799px; flex: none; position: relative; border: 3px solid #e8e8e8; border-radius: 10px;
  background-color: #fafafa;
  background-image:
    linear-gradient(#e6e6e6 2px, transparent 2px),
    linear-gradient(90deg, #e6e6e6 2px, transparent 2px),
    linear-gradient(#f1f1f1 1px, transparent 1px),
    linear-gradient(90deg, #f1f1f1 1px, transparent 1px);
  background-size: 195px 195px, 195px 195px, 19.500px 19.500px, 19.500px 19.500px;
  background-position: 0 5px, -1px 0, 0 5px, -1px 0;
}
.attitude { padding: 18px 0 0 20px; display: grid; grid-template-columns: 120px auto; justify-content: start; font-size: 24.400px; line-height: 32px; color: #555; }
.reset-z { position: absolute; top: 18px; right: 19px; width: 362px; height: 60px; border: 2px solid #b5b5b5; border-radius: 6px; background: #ececec; color: #2b2bb8; font-family: inherit; font-size: 23.700px; font-weight: 700; padding: 0; }
.drone { position: absolute; left: 352px; top: 255px; width: 860px; height: 200px; }

.side { flex: 1; display: flex; flex-direction: column; gap: 21.500px; }
.panel { border: 2px solid #c6c6c6; border-radius: 8px; overflow: hidden; background: #f9f9f9; }
.panel-head { height: 53px; padding-left: 20px; line-height: 50px; background: #828784; color: #fff; font-size: 26px; font-weight: 600; }
.panel-body { padding: 1px 20px 10px; }
.row { display: flex; justify-content: space-between; align-items: center; min-height: 45px; padding-bottom: 1px; border-bottom: 2px dotted #cfcfcf; font-size: 22px; line-height: 29px; color: #333; }
.row.two-line { min-height: 74px; }
.row:last-child { border-bottom: 0; }
.row-value { text-align: right; }
.gauges { height: 201px; display: flex; justify-content: flex-start; padding: 29px 0 0 86px; gap: 36px; }
.gauge { width: 150px; height: 151px; flex: none; filter: blur(.3px); }
.gauge-tiny { font-family: "Open Sans", sans-serif; font-size: 5px; fill: #e8e8e8; }
.compass-text { font-family: "Open Sans", sans-serif; font-size: 14px; fill: #e6e6e6; }
.ticks-fine { fill: none; stroke: #e8e8e8; stroke-width: 6; stroke-dasharray: 1 4.585; }
.ticks-major { fill: none; stroke: #fff; stroke-width: 9; stroke-dasharray: 1.300 9.695; }

/* bottom status */
.status { height: 41px; display: flex; align-items: center; border-top: 3px solid #7f807c; background: #bdbdb3; font-size: 24px; color: #333; white-space: nowrap; }
.stat { height: 100%; display: flex; align-items: center; padding: 0 20px; border-right: 2px solid #84857f; }
.cpu-stat { border-right: 0; }
.version-stat { margin-left: auto; border-right: 0; border-left: 2px solid #84857f; padding-right: 19px; font-size: 23.900px; }
```
